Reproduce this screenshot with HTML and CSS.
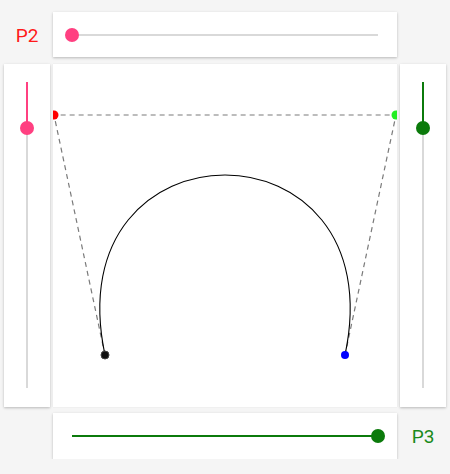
FILE: index.html
```html
<!DOCTYPE html>
<html>
<head>
<meta charset="utf-8">
<link rel="stylesheet" href="styles.css">
</head>
<body>
<div class="board">
  <div class="label label-p2">P2</div>
  <div class="card card-h">
    <div class="hslider">
      <div class="track"></div>
      <div class="fill fill-pink" style="width:0%"></div>
      <div class="thumb thumb-pink" style="left:0%"></div>
    </div>
  </div>
  <div></div>

  <div class="card card-v">
    <div class="vslider">
      <div class="track"></div>
      <div class="fill fill-pink" style="height:15%"></div>
      <div class="thumb thumb-pink" style="top:15%"></div>
    </div>
  </div>
  <div class="canvas">
    <svg width="344" height="343" viewBox="0 0 344 343">
      <polyline class="hull" points="52,291 1,51 343,51 292,291"/>
      <path class="curve" d="M52 291 C1 51 343 51 292 291"/>
      <circle class="pt pt0" cx="52" cy="291" r="4"/>
      <circle class="pt pt1" cx="1" cy="51" r="4.5"/>
      <circle class="pt pt2" cx="343" cy="51" r="4.5"/>
      <circle class="pt pt3" cx="292" cy="291" r="4"/>
    </svg>
  </div>
  <div class="card card-v">
    <div class="vslider">
      <div class="track"></div>
      <div class="fill fill-green" style="height:15%"></div>
      <div class="thumb thumb-green" style="top:15%"></div>
    </div>
  </div>

  <div></div>
  <div class="card card-h card-bottom">
    <div class="hslider">
      <div class="track"></div>
      <div class="fill fill-green" style="width:100%"></div>
      <div class="thumb thumb-green" style="left:100%"></div>
    </div>
  </div>
  <div class="label label-p3">P3</div>
</div>
</body>
</html>
```
FILE: styles.css
```css
html, body {
  margin: 0;
  padding: 0;
  background: #f5f5f5;
  font-family: Roboto, "Liberation Sans", sans-serif;
}

/* three columns (slider, canvas, slider) by three rows */
.board {
  display: grid;
  grid-template-columns: 46px 344px 46px;
  grid-template-rows: 45px 343px 45px;
  column-gap: 3px;
  row-gap: 7px;
  padding: 12px 4px 0 4px;
}

.label {
  display: flex;
  align-items: center;
  justify-content: center;
  font-size: 19px;
  padding-top: 1px;
}
.label-p2 { color: #ff1a1a; }
.label-p3 { color: #1a8a1a; margin-top: -1px; }

.card {
  background: #fff;
  box-shadow: 0 1px 3px rgba(0, 0, 0, 0.16), 0 1px 2px rgba(0, 0, 0, 0.10);
  position: relative;
}

.card-h {
  display: flex;
  align-items: center;
  padding: 0 19px;
}
.card-bottom { margin-top: -1px; }

.card-v {
  display: flex;
  justify-content: center;
  padding: 18px 0 19px;
}

.canvas {
  background: #fff;
  box-shadow: 0 0 1px rgba(0, 0, 0, 0.12);
  overflow: hidden;
}
.canvas svg { display: block; }

.hull {
  fill: none;
  stroke: #7a7a7a;
  stroke-width: 1.2;
  stroke-dasharray: 5 4;
}
.curve {
  fill: none;
  stroke: #000;
  stroke-width: 1.1;
}
.pt0 { fill: #111; stroke: #444; stroke-width: 1; }
.pt1 { fill: #ff0000; }
.pt2 { fill: #22ee22; }
.pt3 { fill: #0000ff; }

/* sliders */
.hslider {
  position: relative;
  flex: 1;
  height: 2px;
}
.vslider {
  position: relative;
  width: 2px;
  height: 100%;
}
.track {
  position: absolute;
  inset: 0;
  background: #d9d9d9;
}
.fill {
  position: absolute;
  left: 0;
  top: 0;
}
.hslider .fill { height: 2px; }
.vslider .fill { width: 2px; }
.fill-pink { background: #ff4081; }
.fill-green { background: #0b7a0b; }

.thumb {
  position: absolute;
  width: 14px;
  height: 14px;
  border-radius: 50%;
  transform: translate(-50%, -50%);
}
.hslider .thumb { top: 1px; }
.vslider .thumb { left: 1px; }
.thumb-pink { background: #ff4081; }
.thumb-green { background: #0b7a0b; }
```
